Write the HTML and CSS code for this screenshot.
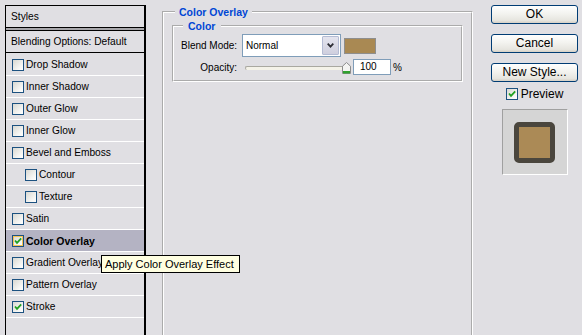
FILE: index.html
```html
<!DOCTYPE html>
<html lang="en">
<head>
    <meta charset="UTF-8">
    <title>Layer Style</title>
    <link rel="stylesheet" href="styles.css">
</head>
<body>
    <!-- Styles list -->
    <div class="styles-panel">
        <div class="panel-title">Styles</div>
        <div class="panel-rule"></div>
        <div class="panel-item blending">Blending Options: Default</div>
        <div class="panel-item"><span class="check"></span>Drop Shadow</div>
        <div class="panel-item"><span class="check"></span>Inner Shadow</div>
        <div class="panel-item"><span class="check"></span>Outer Glow</div>
        <div class="panel-item"><span class="check"></span>Inner Glow</div>
        <div class="panel-item"><span class="check"></span>Bevel and Emboss</div>
        <div class="panel-item sub"><span class="check"></span>Contour</div>
        <div class="panel-item sub"><span class="check"></span>Texture</div>
        <div class="panel-item"><span class="check"></span>Satin</div>
        <div class="panel-item active">
            <span class="check hover"><svg viewBox="0 0 10 10"><path d="M2 4.5 L4 6.8 L8.2 2.4" /></svg></span>Color Overlay
        </div>
        <div class="panel-item"><span class="check"></span>Gradient Overlay</div>
        <div class="panel-item"><span class="check"></span>Pattern Overlay</div>
        <div class="panel-item">
            <span class="check"><svg viewBox="0 0 10 10"><path d="M2 4.5 L4 6.8 L8.2 2.4" /></svg></span>Stroke
        </div>
    </div>

    <!-- Effect settings -->
    <fieldset class="group effect-group">
        <legend>Color Overlay</legend>
        <fieldset class="group color-group">
            <legend>Color</legend>
            <div class="field-row">
                <label class="field-label">Blend Mode:</label>
                <div class="combo">
                    <span class="combo-value">Normal</span>
                    <span class="combo-button">
                        <svg width="7" height="5" viewBox="0 0 7 5"><path d="M0.7 0.7 L3.5 3.6 L6.3 0.7" /></svg>
                    </span>
                </div>
                <span class="swatch"></span>
            </div>
            <div class="field-row opacity-row">
                <label class="field-label">Opacity:</label>
                <div class="slider">
                    <div class="slider-track"></div>
                    <svg class="slider-thumb" width="9" height="12" viewBox="0 0 9 12">
                        <path d="M4.5 0.5 L8.5 4.2 V11.5 H0.5 V4.2 Z" fill="#f4f4f2" stroke="#8c8c8c" />
                        <rect x="1" y="9" width="7" height="2.5" fill="#2ea12e" />
                    </svg>
                </div>
                <div class="num-input">100</div>
                <span class="unit">%</span>
            </div>
        </fieldset>
    </fieldset>

    <!-- Dialog buttons -->
    <div class="actions">
        <button class="btn">OK</button>
        <button class="btn">Cancel</button>
        <button class="btn">New Style...</button>
        <div class="preview-toggle">
            <span class="check"><svg viewBox="0 0 10 10"><path d="M2 4.5 L4 6.8 L8.2 2.4" /></svg></span>Preview
        </div>
        <div class="preview-box">
            <div class="preview-swatch"></div>
        </div>
    </div>

    <div class="tooltip">Apply Color Overlay Effect</div>
</body>
</html>
```

FILE: styles.css
```css
* {
    box-sizing: border-box;
}

body {
    margin: 0;
    width: 582px;
    height: 335px;
    overflow: hidden;
    position: relative;
    display: flex;
    align-items: flex-start;
    background-color: #e0dfe3;
    color: #000;
    font-family: "Liberation Sans", Arial, sans-serif;
    font-size: 10px;
}

/* left list */
.styles-panel {
    flex: none;
    width: 141px;
    height: 340px;
    margin: 5px 0 0 5px;
    border: 1px solid #000;
    border-right-width: 2px;
    border-bottom: none;
    font-size: 10.2px;
}

.panel-title {
    height: 21px;
    line-height: 21px;
    padding-left: 5px;
}

.panel-rule {
    height: 4px;
    border-top: 1px solid #000;
    border-bottom: 1px solid #000;
    background-color: #a7a6aa;
}

.panel-item {
    height: 22px;
    display: flex;
    align-items: center;
    padding-left: 6px;
    border-bottom: 1px solid #fff;
    white-space: nowrap;
}

.panel-item.blending {
    padding-left: 5px;
    border-bottom-color: #000;
    margin-bottom: 1px;
}

.panel-item.sub {
    padding-left: 19px;
}

.panel-item.active {
    background-color: #b4b3c3;
    font-weight: bold;
    font-size: 10.5px;
}

.check {
    flex: none;
    display: flex;
    width: 12px;
    height: 12px;
    margin-right: 2px;
    border: 1px solid #1c5180;
    background: linear-gradient(135deg, #d8d8d2, #f6f6f4 70%, #fff);
}

.check.hover {
    box-shadow: inset 0 0 0 1px #f7c453;
}

.check svg {
    width: 10px;
    height: 10px;
}

.check path {
    fill: none;
    stroke: #21a121;
    stroke-width: 1.8;
}

/* group boxes */
.group {
    min-width: 0;
    margin: 0;
    padding: 0 8px;
    border: 2px groove #fff;
}

.group legend {
    margin-left: 3px;
    padding: 0 4px;
    line-height: 14px;
    color: #0046d5;
    font-weight: bold;
    font-size: 10.5px;
}

.effect-group {
    flex: none;
    width: 311px;
    height: 345px;
    margin: 5px 0 0 16px;
}

.color-group {
    padding: 1px 7px 5px;
}

.color-group legend {
    margin-left: 2px;
    padding: 0 6px 0 5px;
}

.field-row {
    display: flex;
    align-items: center;
    height: 23px;
}

.opacity-row {
    height: 16px;
    margin-top: 2px;
}

.field-label {
    flex: none;
    width: 56px;
    text-align: right;
    white-space: nowrap;
}

.combo {
    display: flex;
    width: 99px;
    height: 23px;
    margin-left: 5px;
    border: 1px solid #7f9db9;
    background-color: #fff;
}

.combo-value {
    flex: 1;
    padding-left: 3px;
    line-height: 21px;
}

.combo-button {
    display: flex;
    align-items: center;
    justify-content: center;
    width: 17px;
    margin: 1px;
    border: 1px solid #b4bbd3;
    border-radius: 1px;
    background: linear-gradient(#e4e4ee, #cfcfde);
}

.combo-button path {
    fill: none;
    stroke: #2d2d35;
    stroke-width: 1.8;
}

.swatch {
    width: 32px;
    height: 16px;
    margin-left: 3px;
    border: 1px solid #8e8e8e;
    background-color: #a98953;
}

.slider {
    position: relative;
    width: 105px;
    height: 16px;
    margin-left: 8px;
}

.slider-track {
    width: 100px;
    height: 4px;
    margin-top: 7px;
    border-top: 1px solid #a9a8a0;
    border-left: 1px solid #a9a8a0;
    border-radius: 2px 0 0 2px;
    background-color: #f4f2e8;
}

.slider-thumb {
    position: absolute;
    left: 97px;
    top: 3px;
}

.num-input {
    width: 38px;
    height: 16px;
    margin-left: 3px;
    padding-left: 6px;
    line-height: 14px;
    border: 1px solid #7f9db9;
    background-color: #fff;
}

.unit {
    margin-left: 2px;
}

/* right column */
.actions {
    flex: none;
    width: 87px;
    margin: 5px 0 0 18px;
    display: flex;
    flex-direction: column;
    align-items: center;
    font-size: 12px;
}

.btn {
    width: 87px;
    height: 19px;
    padding: 0;
    border: 1px solid #003c74;
    border-radius: 3px;
    background: linear-gradient(#fefefe, #f3f3ef 45%, #e6e5df 85%, #d6d0c5);
    color: #000;
    font: inherit;
    line-height: 15px;
}

.btn + .btn {
    margin-top: 10px;
}

.preview-toggle {
    display: flex;
    align-items: center;
    height: 13px;
    margin-top: 5px;
}

.preview-toggle .check {
    margin-right: 3px;
}

.preview-box {
    display: flex;
    align-items: center;
    justify-content: center;
    width: 66px;
    height: 66px;
    margin-top: 9px;
    border: 1px solid #fff;
    border-top-color: #a0a0a0;
    border-left-color: #a0a0a0;
    background-color: #d5d5d5;
}

.preview-swatch {
    width: 41px;
    height: 41px;
    border: 5px solid #4a463d;
    border-radius: 5px;
    background-color: #ab8a56;
}

/* hover tip */
.tooltip {
    position: absolute;
    left: 101px;
    top: 255px;
    width: 139px;
    height: 18px;
    padding-left: 3px;
    border: 1px solid #000;
    background-color: #ffffe1;
    font-size: 11px;
    line-height: 16px;
    white-space: nowrap;
}
```
